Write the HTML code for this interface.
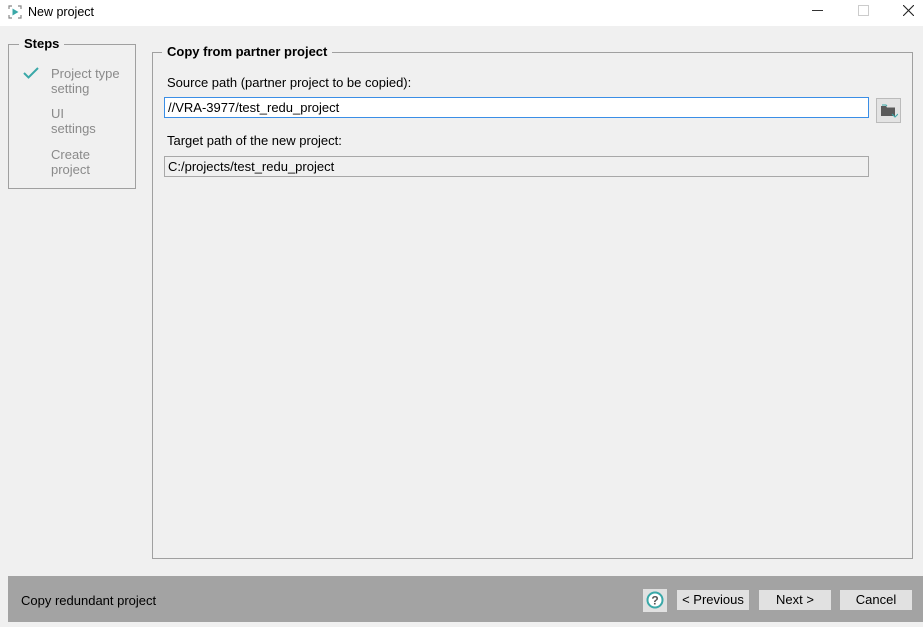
<!DOCTYPE html>
<html><head><style>
body{margin:0;width:923px;height:627px;background:#f0f0f0;font-family:"Liberation Sans",sans-serif;font-size:12.5px;color:#000;position:relative;overflow:hidden}
.a{position:absolute}
.title{left:0;top:0;width:923px;height:26px;background:#fff}
.gb{border:1px solid #a0a0a0;box-sizing:border-box}
.leg{background:#f0f0f0;font-weight:bold;font-size:13px;padding:0 5px}
.inp{box-sizing:border-box;height:21px;padding-left:3px;line-height:19px}
.btn{background:#e1e1e1;box-sizing:border-box;height:20px;text-align:center;line-height:19px;font-size:13px;top:590px}
.g{color:#8a8a8a;font-size:13px;line-height:15px}
</style></head><body>
<div class="a title">
 <svg class="a" style="left:8px;top:5px" width="14" height="14" viewBox="0 0 14 14"><path d="M1 4V1h3M10 1h3v3M13 10v3h-3M4 13H1v-3" stroke="#888" fill="none" stroke-width="1.2"/><path d="M4.5 3.5L10.5 7 4.5 10.5z" fill="#3aa8a8"/></svg>
 <div class="a" style="left:28px;top:5px;font-size:12.5px">New project</div>
 <div class="a" style="left:812px;top:10px;width:11px;height:1px;background:#333"></div>
 <div class="a" style="left:858px;top:5px;width:9px;height:9px;border:1px solid #ccc"></div>
 <svg class="a" style="left:903px;top:5px" width="11" height="11"><path d="M0 0L11 11M11 0L0 11" stroke="#222" stroke-width="1.1"/></svg>
</div>
<div class="a gb" style="left:8px;top:44px;width:128px;height:145px"></div>
<div class="a leg" style="left:19px;top:36px">Steps</div>
<svg class="a" style="left:23px;top:67px" width="16" height="12"><path d="M1 6l4.5 4.5L15 1" stroke="#3aa8a8" stroke-width="2" fill="none"/></svg>
<div class="a g" style="left:51px;top:66px">Project type<br>setting</div>
<div class="a g" style="left:51px;top:106px">UI<br>settings</div>
<div class="a g" style="left:51px;top:147px">Create<br>project</div>
<div class="a gb" style="left:152px;top:52px;width:761px;height:507px"></div>
<div class="a leg" style="left:162px;top:44px">Copy from partner project</div>
<div class="a" style="left:167px;top:75px;font-size:13px">Source path (partner project to be copied):</div>
<div class="a inp" style="left:164px;top:97px;width:705px;border:1px solid #3a8ee6;background:#fff;font-size:13px">//VRA-3977/test_redu_project</div>
<div class="a" style="left:876px;top:98px;width:25px;height:25px;box-sizing:border-box;border:1px solid #bbb;background:#e3e3e3">
 <svg class="a" style="left:4px;top:5px" width="17" height="14"><path d="M0 2h5l1 1.5h8V12H0z" fill="#5a5a5a"/><path d="M1 1h4l1 1" stroke="#3aa8a8" fill="none"/><path d="M11 10l3 3 3-3" stroke="#3aa8a8" fill="none"/></svg>
</div>
<div class="a" style="left:167px;top:133px;font-size:13px">Target path of the new project:</div>
<div class="a inp" style="left:164px;top:156px;width:705px;border:1px solid #a8a8a8;background:#f0f0f0;font-size:13px">C:/projects/test_redu_project</div>
<div class="a" style="left:8px;top:576px;width:915px;height:46px;background:#a3a3a3"></div>
<div class="a" style="left:21px;top:593px;font-size:13px">Copy redundant project</div>
<div class="a" style="left:643px;top:589px;width:24px;height:23px;background:#e1e1e1">
 <svg class="a" style="left:3px;top:2px" width="18" height="18"><circle cx="9" cy="9" r="7.5" fill="#fff" stroke="#3aa8a8" stroke-width="2"/><text x="9" y="13.5" text-anchor="middle" font-size="12" font-weight="bold" fill="#555" font-family="Liberation Sans">?</text></svg>
</div>
<div class="a btn" style="left:677px;width:72px">&lt; Previous</div>
<div class="a btn" style="left:759px;width:72px">Next &gt;</div>
<div class="a btn" style="left:840px;width:72px">Cancel</div>
</body></html>
